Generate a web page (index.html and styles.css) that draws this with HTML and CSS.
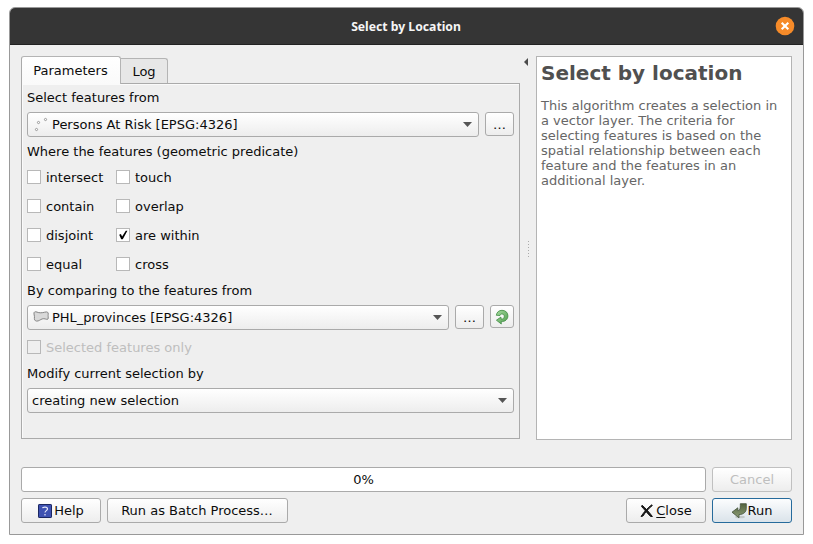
FILE: index.html
```html
<!DOCTYPE html>
<html lang="en">
<head>
<meta charset="utf-8">
<title>Select by Location</title>
<link rel="stylesheet" href="styles.css">
</head>
<body>
<div class="window">
  <header class="titlebar">
    <span class="title">Select by Location</span>
    <svg class="window-close" width="20" height="20" viewBox="0 0 20 20"><circle cx="10" cy="10" r="9.3" fill="#f68b29"/><path d="M6.7 6.7l6.6 6.6M13.3 6.7l-6.6 6.6" stroke="#fff" stroke-width="2.1"/></svg>
  </header>
  <main class="body">
    <div class="upper">
      <section class="left">
        <nav class="tabs"><span class="tab active">Parameters</span><span class="tab">Log</span></nav>
        <div class="panel">
          <div class="label">Select features from</div>
          <div class="row">
            <div class="combo"><svg class="layer-icon" width="18" height="16" viewBox="0 0 18 16" fill="#fff" stroke="#858585" stroke-width=".8"><circle cx="4.5" cy="12.5" r="1.1"/><circle cx="6.500" cy="5.500" r="1.1"/><circle cx="13.500" cy="2.5" r="1.1"/></svg><span>Persons At Risk [EPSG:4326]</span><i class="arrow"></i></div>
            <div class="button tool">…</div>
          </div>
          <div class="label">Where the features (geometric predicate)</div>
          <div class="predicates">
            <div class="check"><i class="box"></i>intersect</div><div class="check"><i class="box"></i>touch</div>
            <div class="check"><i class="box"></i>contain</div><div class="check"><i class="box"></i>overlap</div>
            <div class="check"><i class="box"></i>disjoint</div><div class="check"><i class="box"><svg width="12" height="12" viewBox="0 0 12 12"><path d="M2.2 5.7L3.900 5.1 5.100 7.600 8.800 1.8 10.4 1.8 5.8 10.3 4.2 10.3z" fill="#000"/></svg></i>are within</div>
            <div class="check"><i class="box"></i>equal</div><div class="check"><i class="box"></i>cross</div>
          </div>
          <div class="label">By comparing to the features from</div>
          <div class="row">
            <div class="combo"><svg class="layer-icon" width="18" height="16" viewBox="0 0 18 16"><path d="M2 4C1.500 1.800 3.300 1.300 5 2.100c2.200 1 5.200.8 7.700.1 2.700-.8 3.800.1 3.500 2-.3 1.600.3 3.700-.2 4.800-.8 1-2.200-.2-4.200-.3-2.500 0-3.500 1.500-5.600 2.200-2.200.7-3.900-.3-3.800-2.300.1-1.500.1-3-.4-4.600z" fill="#d9d9d9" stroke="#858585"/></svg><span>PHL_provinces [EPSG:4326]</span><i class="arrow"></i></div>
            <div class="button tool">…</div>
            <div class="button iterate"><svg width="16" height="16" viewBox="0 0 16 16"><defs><linearGradient id="green" x1="0" y1="0" x2="1" y2="1"><stop offset="0" stop-color="#a7dba0"/><stop offset="1" stop-color="#4d9c4c"/></linearGradient></defs><path d="M2.3 6.3C2.7 3.200 5 1.3 8 1.3c3.600 0 5.900 2.400 5.900 5.500 0 3.700-2.800 5.900-6.700 5.800l.1 2.400-4.900-3.800 4.500-3.100.2 2c2.200.1 3.300-1.300 3.200-2.900C10.200 5.800 9.200 5 7.900 5 6.800 5 6.200 5.500 6 6.500z" fill="url(#green)" stroke="#3f8b43" stroke-width=".8"/></svg></div>
          </div>
          <div class="check disabled"><i class="box"></i>Selected features only</div>
          <div class="label">Modify current selection by</div>
          <div class="combo"><span>creating new selection</span><i class="arrow"></i></div>
        </div>
      </section>
      <div class="splitter">
        <svg class="collapse" width="4" height="8" viewBox="0 0 4 8"><path d="M4 0v8L0 4z" fill="#4b4b4b"/></svg>
        <div class="grip"><i></i><i></i><i></i><i></i><i></i><i></i></div>
      </div>
      <aside class="help">
        <h1>Select by location</h1>
        <p>This algorithm creates a selection in a vector layer. The criteria for selecting features is based on the spatial relationship between each feature and the features in an additional layer.</p>
      </aside>
    </div>
    <div class="footer-row"><div class="progress">0%</div><div class="button fixed disabled">Cancel</div></div>
    <div class="footer-row actions">
      <div class="button fixed"><svg width="16" height="16" viewBox="0 0 16 16"><rect x="1.5" y="1.5" width="13" height="13" rx=".6" fill="#3e51b1" stroke="#1b2762"/><path d="M5.5 5.2C5.8 3.7 10.5 3.4 10.5 5.9 10.5 7.6 8 7.7 8 9.6M8 11v1.4" fill="none" stroke="#e8ebfa" stroke-width="1.2"/></svg><span>Help</span></div>
      <div class="button batch">Run as Batch Process…</div>
      <div class="spacer"></div>
      <div class="button fixed"><svg width="16" height="16" viewBox="0 0 16 16"><path d="M3 2.300C6 4.500 10 9 13.400 13.500L11.600 13.500C8.500 10.500 5 6 2.500 3.500z" fill="#151515" stroke="#151515"/><path d="M12.800 1.800C9 4.500 5 9 2 13.500L4 13C6.500 9 9.500 5.500 13.300 2.600z" fill="#151515" stroke="#151515"/></svg><span><u>C</u>lose</span></div>
      <div class="button fixed primary"><svg width="16" height="16" viewBox="0 0 16 16"><defs><linearGradient id="olive" x1="0" y1="0" x2="0" y2="1"><stop offset="0" stop-color="#53643f"/><stop offset="1" stop-color="#8c9c75"/></linearGradient></defs><ellipse cx="9" cy="14" rx="5" ry="1.3" fill="#c3c9c9"/><path d="M9.300.700h6v4.500c0 3.900-2.700 6.200-7.300 6.400v3.200L1 9.200 6.800 4.800v2.700c1.900-.1 2.700-1.300 2.500-6.800z" fill="url(#olive)" stroke="#42513a" stroke-width=".8"/></svg><span>Run</span></div>
    </div>
  </main>
</div>
</body>
</html>
```
FILE: styles.css
```css
* { box-sizing: border-box; }
body {
  margin: 0;
  padding: 7px 9px;
  height: 544px;
  overflow: hidden;
  background: #fff;
  color: #0c0c0c;
  font: 13px/15px "DejaVu Sans", sans-serif;
}
.window {
  width: 795px;
  height: 528px;
  border: 1px solid #999;
  border-radius: 6px 6px 0 0;
  background: #efefef;
  overflow: hidden;
}
.titlebar {
  display: grid;
  grid-template-columns: 1fr auto 1fr;
  align-items: center;
  height: 37px;
  padding-right: 8px;
  background: #353535;
  border-bottom: 1px solid #222;
}
.title {
  grid-column: 2;
  padding: 1px 0 0 7px;
  color: #f5f5f5;
  font: bold 12.2px/18px "Noto Sans", sans-serif;
}
.window-close { justify-self: end; }
.body { padding: 11px 11px 0; }
.upper { display: flex; height: 384px; }
.left { width: 499px; }
.tabs { display: flex; align-items: flex-end; height: 27px; }
.tab {
  width: 47px;
  height: 25px;
  padding-top: 5px;
  border: 1px solid #b4b4b4;
  border-left: 0;
  border-bottom: 0;
  border-radius: 0 3px 0 0;
  background: #e7e7e7;
  text-align: center;
}
.tab.active {
  position: relative;
  z-index: 1;
  width: 100px;
  height: 28px;
  margin-bottom: -1px;
  padding: 6px 1px 0 0;
  border-left: 1px solid #aaa;
  border-radius: 3px 3px 0 0;
  background: linear-gradient(#fff, #fafafa);
}
.panel {
  height: 356px;
  padding: 6px 5px;
  border: 1px solid #aaa;
  box-shadow: inset 1px 1px #fafafa;
}
.label { height: 15px; margin-bottom: 7px; }
.row { display: flex; gap: 6px; height: 25px; margin-bottom: 7px; }
.combo, .button {
  display: flex;
  align-items: center;
  height: 25px;
  border: 1px solid #aaa;
  border-radius: 3px;
  background: linear-gradient(#fff, #ededed);
}
.combo { flex: 1; padding: 0 6px 0 4px; white-space: pre; }
.panel > .combo { height: 25px; }
.layer-icon { width: 18px; height: 16px; margin-right: 2px; }
.arrow {
  width: 9px;
  height: 5px;
  margin-left: auto;
  background: #555;
  clip-path: polygon(0 0, 100% 0, 50% 100%);
}
.button { justify-content: center; gap: 1px; }
.button.tool { width: 29px; height: 24px; }
.button.iterate { width: 24px; height: 23px; }
.predicates {
  display: grid;
  grid-template-columns: 89px 1fr;
  grid-auto-rows: 29px;
  margin: -3px 0 4px;
}
.check { display: flex; align-items: center; gap: 5px; }
.box {
  width: 14px;
  height: 14px;
  margin-bottom: 2px;
  border: 1px solid #b8b8b8;
  background: #fff;
}
.box svg { display: block; }
.check.disabled { height: 15px; margin: 10px 0 11px; color: #bebebe; }
.disabled .box { background: #efefef; }
.splitter {
  display: flex;
  flex-direction: column;
  align-items: center;
  width: 16px;
  padding-top: 2px;
}
.collapse { margin-right: 4px; }
.grip { display: grid; gap: 2px; margin-top: 175px; }
.grip i { width: 1px; height: 1px; background: #aaa; }
.help {
  width: 256px;
  padding: 5px 4px;
  border: 1px solid #b4b4b4;
  background: #fff;
  color: #666;
}
.help h1 { margin: 0; color: #505050; font-size: 20px; line-height: 23px; }
.help p { margin: 13px 0 0; }
.footer-row { display: flex; gap: 6px; margin-top: 27px; }
.footer-row.actions { margin-top: 6px; }
.progress {
  flex: 1;
  height: 25px;
  border: 1px solid #aaa;
  border-radius: 3px;
  background: #fff;
  line-height: 23px;
  text-align: center;
}
.button.fixed { width: 80px; padding-right: 1px; }
.button.batch { width: 181px; padding-right: 1px; }
.button.disabled { padding-right: 0; color: #bebebe; border-color: #c0c0c0; }
.button.primary { border-color: #266b9c; background: linear-gradient(#fcfdfe, #dae3ea); }
.spacer { flex: 1; }
u { text-underline-offset: 2px; text-decoration-skip-ink: none; }
```
